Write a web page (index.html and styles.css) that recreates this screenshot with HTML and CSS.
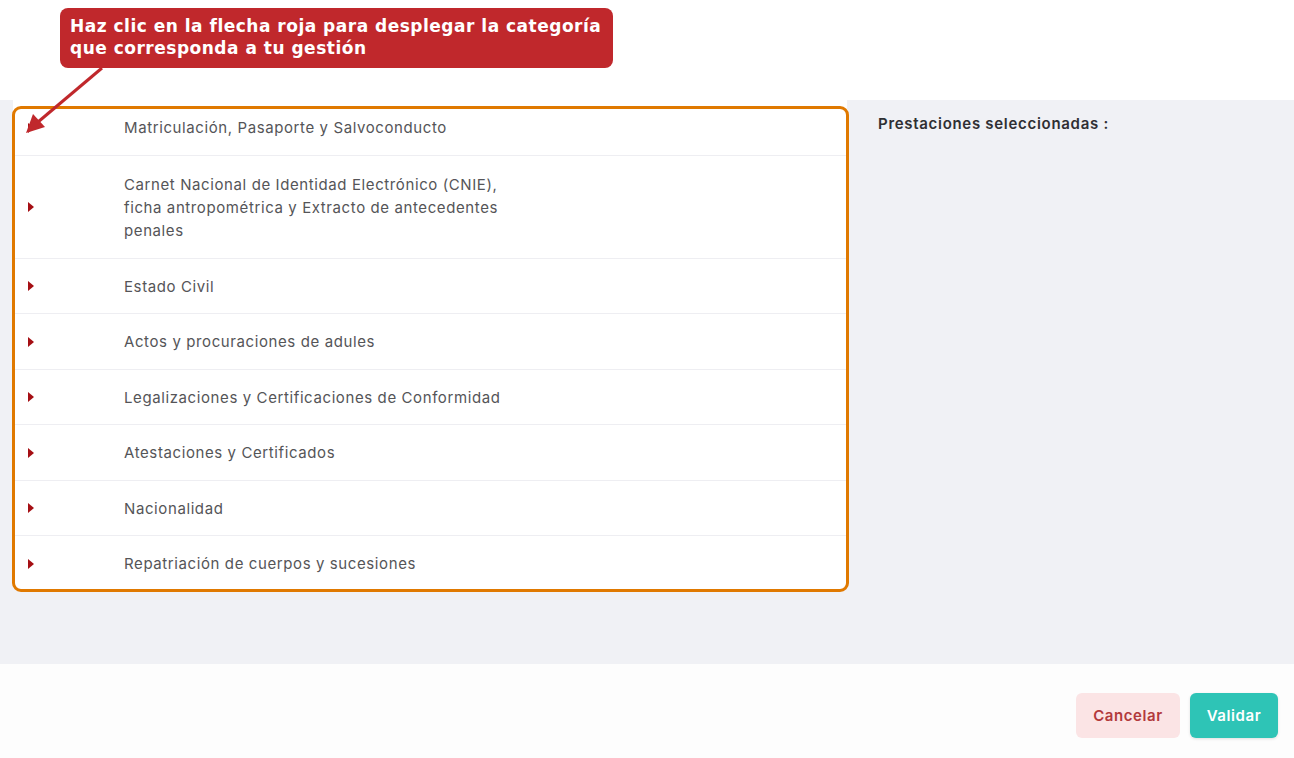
FILE: index.html
```html
<!DOCTYPE html>
<html lang="es">
<head>
<meta charset="utf-8">
<title>Prestaciones</title>
<link rel="stylesheet" href="styles.css">
</head>
<body>
<div class="page">
  <header class="top"></header>
  <main class="main">
    <ul class="cats">
      <li class="cat"><span class="caret"></span><span class="label">Matriculación, Pasaporte y Salvoconducto</span></li>
      <li class="cat tall"><span class="caret"></span><span class="label">Carnet Nacional de Identidad Electrónico (CNIE),<br>ficha antropométrica y Extracto de antecedentes<br>penales</span></li>
      <li class="cat"><span class="caret"></span><span class="label">Estado Civil</span></li>
      <li class="cat"><span class="caret"></span><span class="label">Actos y procuraciones de adules</span></li>
      <li class="cat"><span class="caret"></span><span class="label">Legalizaciones y Certificaciones de Conformidad</span></li>
      <li class="cat"><span class="caret"></span><span class="label">Atestaciones y Certificados</span></li>
      <li class="cat"><span class="caret"></span><span class="label">Nacionalidad</span></li>
      <li class="cat last"><span class="caret"></span><span class="label">Repatriación de cuerpos y sucesiones</span></li>
    </ul>
    <section class="selected">
      <h2 class="selected-title">Prestaciones seleccionadas :</h2>
    </section>
  </main>
  <footer class="footer">
    <button class="btn btn-cancel">Cancelar</button>
    <button class="btn btn-ok">Validar</button>
  </footer>

  <div class="highlight"></div>
  <div class="callout">Haz clic en la flecha roja para desplegar la categoría<br>que corresponda a tu gestión</div>
  <svg class="arrow" width="120" height="140" viewBox="0 0 120 140">
    <line x1="102" y1="68" x2="38" y2="122" stroke="#c0282c" stroke-width="3"/>
    <polygon points="26,133 33,114 45,127" fill="#c0282c"/>
  </svg>
</div>
</body>
</html>
```

FILE: styles.css
```css
* { box-sizing: border-box; }
html, body { margin: 0; padding: 0; }
body {
  width: 1294px;
  height: 758px;
  overflow: hidden;
  background: #ffffff;
  font-family: "Inter", "Noto Sans", sans-serif;
}
.page {
  position: relative;
  width: 1294px;
  height: 758px;
  display: flex;
  flex-direction: column;
}
.top {
  height: 100px;
  background: #ffffff;
}
.main {
  height: 564px;
  background: #f0f1f5;
  display: flex;
  align-items: flex-start;
}
.cats {
  list-style: none;
  margin: 0 0 0 13px;
  padding: 0;
  width: 834px;
  background: #ffffff;
  border-radius: 0 0 8px 8px;
}
.cat {
  display: flex;
  align-items: center;
  padding: 16px 0 15.5px 0;
  border-bottom: 1px solid #eeeef2;
  font-size: 15px;
  line-height: 23px;
  letter-spacing: 0.6px;
  color: #555558;
}
.cat.tall { padding: 17px 0 16px 0; }
.cat.last { border-bottom: none; }
.caret {
  width: 0;
  height: 0;
  margin-left: 15px;
  border-top: 5px solid transparent;
  border-bottom: 5px solid transparent;
  border-left: 6px solid #a50f14;
  flex: none;
}
.label {
  margin-left: 90px;
}
.selected {
  padding: 14px 0 0 31px;
}
.selected-title {
  margin: 0;
  font-size: 15px;
  font-weight: 600;
  color: #2f2f33;
  letter-spacing: 0.7px;
}
.footer {
  flex: 1;
  display: flex;
  justify-content: flex-end;
  align-items: flex-start;
  padding: 29px 16px 0 0;
  gap: 10px;
  background: #fdfdfd;
}
.btn {
  height: 45px;
  border: none;
  border-radius: 6px;
  font-family: "Inter", "Noto Sans", sans-serif;
  font-size: 15px;
  font-weight: 600;
  letter-spacing: 0.6px;
  cursor: pointer;
}
.btn-cancel {
  width: 104px;
  background: #fbe4e5;
  color: #b2393c;
}
.btn-ok {
  width: 88px;
  background: #2ec4b6;
  color: #ffffff;
  box-shadow: 0 1px 3px rgba(0,0,0,0.12);
}
.highlight {
  position: absolute;
  left: 12px;
  top: 106px;
  width: 837px;
  height: 486px;
  border: 3.5px solid #e07900;
  border-radius: 9px;
  pointer-events: none;
}
.callout {
  position: absolute;
  left: 60px;
  top: 8px;
  width: 553px;
  height: 60px;
  padding: 7px 0 0 10px;
  background: #c0282c;
  border-radius: 8px;
  color: #ffffff;
  font-family: "DejaVu Sans", sans-serif;
  font-weight: bold;
  font-size: 17px;
  letter-spacing: 0.5px;
  line-height: 22px;
}
.arrow {
  position: absolute;
  left: 0;
  top: 0;
}
```
